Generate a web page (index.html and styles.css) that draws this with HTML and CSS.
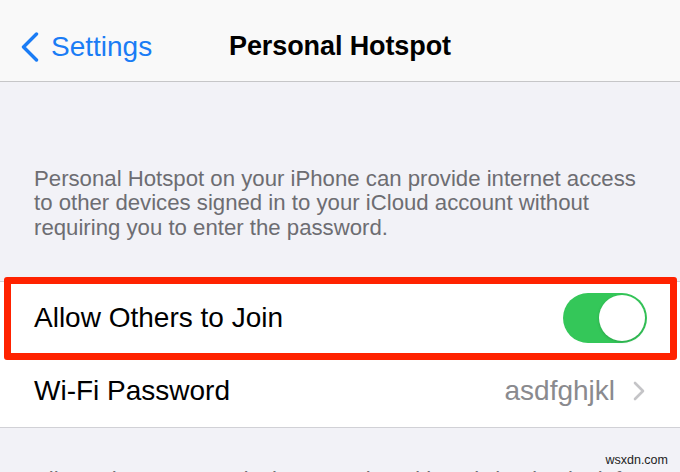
FILE: index.html
```html
<!DOCTYPE html>
<html lang="en">
<head>
<meta charset="utf-8">
<title>Personal Hotspot</title>
<link rel="stylesheet" href="styles.css">
</head>
<body>
<div class="screen">
  <header class="nav">
    <a class="back" href="#">
      <svg class="back-icon" width="18" height="30" viewBox="0 0 18 30" aria-hidden="true">
        <path d="M15.5 2 L2.5 15 L15.5 28" fill="none" stroke="#1a7cf5" stroke-width="3.4" stroke-linecap="round" stroke-linejoin="round"/>
      </svg>
      <span>Settings</span>
    </a>
    <h1 class="title">Personal Hotspot</h1>
    <span class="nav-spacer"></span>
  </header>

  <p class="note">Personal Hotspot on your iPhone can provide internet access to other devices signed in to your iCloud account without requiring you to enter the password.</p>

  <div class="group">
    <div class="row row-highlight">
      <span class="label">Allow Others to Join</span>
      <span class="switch"><span class="knob"></span></span>
    </div>
    <div class="row">
      <span class="label">Wi-Fi Password</span>
      <span class="value">asdfghjkl</span>
      <svg class="disclosure" width="12" height="20" viewBox="0 0 12 20" aria-hidden="true">
        <path d="M2 2 L10 10 L2 18" fill="none" stroke="#c4c4c7" stroke-width="2.6" stroke-linecap="round" stroke-linejoin="round"/>
      </svg>
    </div>
  </div>

  <p class="note footer">Allow other users or devices not signed in to iCloud to look for your shared network “iPhone” when you are in Personal Hotspot settings or when you turn it on in Control Center.</p>

  <span class="watermark">wsxdn.com</span>
</div>
</body>
</html>
```

FILE: styles.css
```css
html, body {
  margin: 0;
  padding: 0;
}

body {
  background: #f2f2f7;
  font-family: "Liberation Sans", Arial, sans-serif;
  color: #000;
}

.screen {
  position: relative;
  width: 680px;
  height: 472px;
  overflow: hidden;
  background: #f2f2f7;
}

.nav {
  display: grid;
  grid-template-columns: 1fr auto 1fr;
  align-items: center;
  box-sizing: border-box;
  height: 82px;
  padding-top: 12px;
  background: #f9f9f9;
  border-bottom: 1px solid #c6c6c8;
}

.back {
  display: flex;
  align-items: center;
  gap: 12px;
  padding-left: 21px;
  color: #1a7cf5;
  text-decoration: none;
  font-size: 28px;
}

.back-icon {
  display: block;
  flex: none;
}

.title {
  margin: 0;
  font-size: 27px;
  font-weight: 700;
  letter-spacing: -0.1px;
}

.note {
  margin: 84.5px 0 41px;
  padding: 0 30px 0 34px;
  font-size: 22.2px;
  line-height: 24.5px;
  color: #6d6d72;
}

.group {
  background: #fff;
  border-top: 1px solid #d1d1d6;
  border-bottom: 1px solid #d1d1d6;
}

.row {
  position: relative;
  display: flex;
  align-items: center;
  height: 72.5px;
  padding: 0 35px 0 34px;
  font-size: 28px;
}

.row-highlight {
  padding-right: 33px;
}

.row-highlight::after {
  content: "";
  position: absolute;
  top: -5px;
  bottom: -5px;
  left: 4px;
  right: 3px;
  border: 7.5px solid #ff2200;
  border-radius: 3px;
}

.label {
  flex: 1;
}

.switch {
  position: relative;
  display: flex;
  justify-content: flex-end;
  align-items: center;
  box-sizing: border-box;
  width: 84px;
  height: 50px;
  padding: 2px;
  border-radius: 25px;
  background: #34c759;
}

.knob {
  width: 46px;
  height: 46px;
  border-radius: 50%;
  background: #fff;
  box-shadow: 0 1px 3px rgba(0, 0, 0, 0.18);
}

.value {
  color: #8a8a8e;
  margin-right: 18px;
}

.disclosure {
  display: block;
  flex: none;
}

.footer {
  margin: 39.5px 0 0;
}

.watermark {
  position: absolute;
  right: 12px;
  top: 453px;
  font-size: 12.5px;
  line-height: 14px;
  color: #222;
  font-family: "Liberation Sans", Arial, sans-serif;
}
```
